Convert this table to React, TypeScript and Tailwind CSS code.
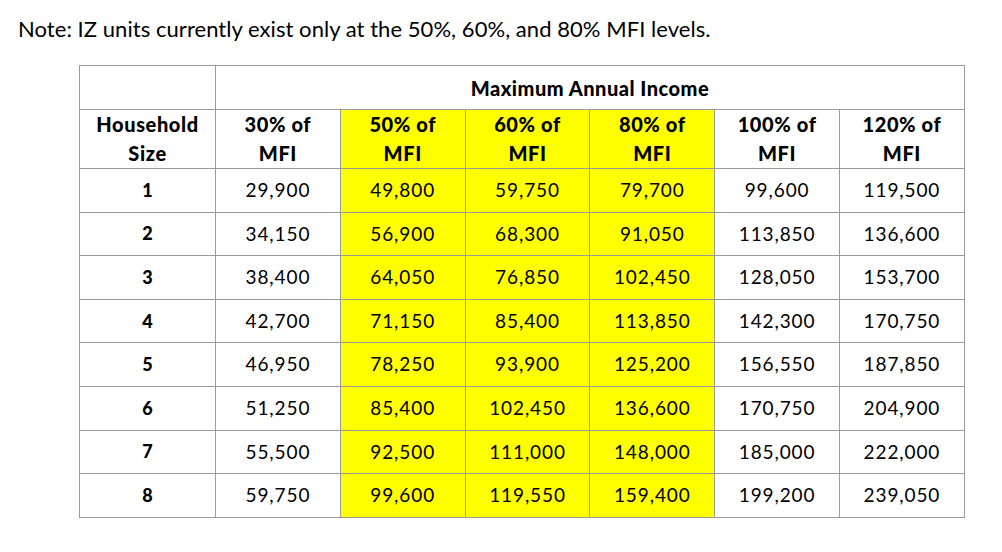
import React from 'react';

const cols = ['30%', '50%', '60%', '80%', '100%', '120%'];
const highlighted = [false, true, true, true, false, false];

const rows: string[][] = [
   ['29,900', '49,800', '59,750', '79,700', '99,600', '119,500'],
   ['34,150', '56,900', '68,300', '91,050', '113,850', '136,600'],
   ['38,400', '64,050', '76,850', '102,450', '128,050', '153,700'],
   ['42,700', '71,150', '85,400', '113,850', '142,300', '170,750'],
   ['46,950', '78,250', '93,900', '125,200', '156,550', '187,850'],
   ['51,250', '85,400', '102,450', '136,600', '170,750', '204,900'],
   ['55,500', '92,500', '111,000', '148,000', '185,000', '222,000'],
   ['59,750', '99,600', '119,550', '159,400', '199,200', '239,050'],
];

export default function App() {
   return (
      <div className="w-[1002px] h-[552px] bg-white text-black font-['Lato','Liberation_Sans',sans-serif]">
         <p className="pl-[18px] pt-[15px] text-[22px] leading-[28px] tracking-[0.05px]">
            Note: IZ units currently exist only at the 50%, 60%, and 80% MFI levels.
         </p>
         <table className="ml-[79px] mt-[22px] w-[885px] table-fixed border-collapse border border-[#9a9a9a]">
            <colgroup>
               <col className="w-[136px]" />
               {cols.map((c) => (
                  <col key={c} className="w-[124.8px]" />
               ))}
            </colgroup>
            <thead>
               <tr className="h-[44px]">
                  <th className="border border-[#9a9a9a] p-0" />
                  <th colSpan={6} className="border border-[#9a9a9a] p-0 text-[20px] font-black tracking-[0.5px]">
                     Maximum Annual Income
                  </th>
               </tr>
               <tr className="h-[58px]">
                  <th className="border border-[#9a9a9a] p-0 text-[20px] font-black tracking-[0.6px] leading-[29px]">
                     Household
                     <br />
                     Size
                  </th>
                  {cols.map((c, i) => (
                     <th
                        key={c}
                        className={`border border-[#9a9a9a] p-0 text-[20px] font-black tracking-[0.6px] leading-[29px] ${highlighted[i] ? 'bg-[#ffff00]' : ''}`}
                     >
                        {c} of
                        <br />
                        MFI
                     </th>
                  ))}
               </tr>
            </thead>
            <tbody>
               {rows.map((r, ri) => (
                  <tr key={ri} className="h-[43.6px]">
                     <td className="border border-[#9a9a9a] p-0 text-center text-[18px] font-black">{ri + 1}</td>
                     {r.map((v, i) => (
                        <td
                           key={i}
                           className={`border border-[#9a9a9a] p-0 text-center text-[19px] tracking-[0.9px] ${highlighted[i] ? 'bg-[#ffff00]' : ''}`}
                        >
                           {v}
                        </td>
                     ))}
                  </tr>
               ))}
            </tbody>
         </table>
      </div>
   );
}
